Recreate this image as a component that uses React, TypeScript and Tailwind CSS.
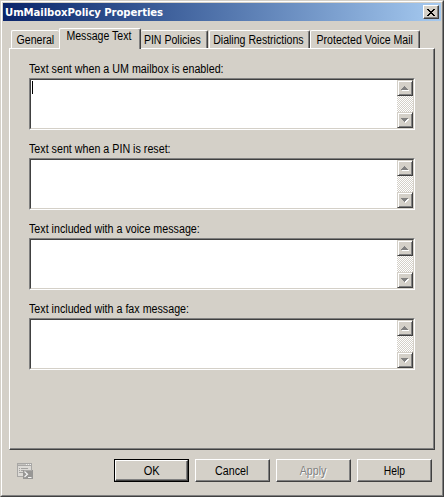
import React from 'react';

const raised =
  'bg-[#d4d0c8] border border-t-white border-l-white border-b-[#404040] border-r-[#404040] shadow-[inset_-1px_-1px_0_#808080]';

function Arrow({ down = false }: { down?: boolean }) {
  return (
    <div className="flex h-4 w-4 items-center justify-center border border-t-[#d4d0c8] border-l-[#d4d0c8] border-b-[#404040] border-r-[#404040] bg-[#d4d0c8] shadow-[inset_1px_1px_0_#fff,inset_-1px_-1px_0_#808080]">
      <svg width="8" height="5" viewBox="0 0 8 5" shapeRendering="crispEdges">
        {down ? (
          <>
            <path d="M1 1h7v1h-1v1h-1v1h-1v1h-1v-1h-1v-1h-1v-1h-1z" fill="#fff" />
            <path d="M0 0h7v1h-1v1h-1v1h-1v1h-1v-1h-1v-1h-1v-1h-1z" fill="#808080" />
          </>
        ) : (
          <>
            <path d="M1 4h7v1h-7z" fill="#fff" />
            <path d="M0 4v-1h1v-1h1v-1h1v-1h1v1h1v1h1v1h1v1z" fill="#808080" />
          </>
        )}
      </svg>
    </div>
  );
}

function Field({ label, caret = false }: { label: string; caret?: boolean }) {
  return (
    <div className="flex h-20 flex-col">
      <label className="h-4 origin-left scale-x-[0.892] leading-[15px]">{label}</label>
      <div className="h-[52px] border border-t-[#808080] border-l-[#808080] border-b-white border-r-white">
        <div className="flex h-full border border-t-[#404040] border-l-[#404040] border-b-[#d4d0c8] border-r-[#d4d0c8] bg-white">
          <div className="flex-1 pt-px pl-px">
            {caret && <div className="h-[13px] w-px bg-black" />}
          </div>
          <div className="flex w-4 flex-col justify-between bg-[repeating-conic-gradient(#fff_0_25%,#d4d0c8_0_50%)] bg-size-[2px_2px]">
            <Arrow />
            <Arrow down />
          </div>
        </div>
      </div>
    </div>
  );
}

function Tab({ children, className }: { children: string; className: string }) {
  return (
    <div className={`flex justify-center rounded-t-[2px] border-t border-l border-white ${className}`}>
      <span className="scale-x-[0.88]">{children}</span>
    </div>
  );
}

const darkEdge = 'border-r border-r-[#404040] shadow-[inset_-1px_0_0_#808080]';

export default function App() {
  return (
    <div className="flex h-[497px] w-[444px] cursor-default flex-col border border-t-[#d4d0c8] border-l-[#d4d0c8] border-r-[#404040] border-b-[#404040] bg-[#d4d0c8] font-['Liberation_Sans',Arial,sans-serif] text-[12px] whitespace-nowrap text-black select-none">
      <div className="flex flex-1 flex-col border border-t-white border-l-white border-r-[#808080] border-b-[#808080] p-px">
        <div className="flex h-[18px] items-center justify-between bg-linear-to-r from-[#0a246a] to-[#a6caf0] px-[2px]">
          <span className="origin-left scale-x-[0.92] pt-[2px] font-['DejaVu_Sans',sans-serif] text-[11px] leading-[16px] font-bold tracking-[-0.1px] text-white">
            UmMailboxPolicy Properties
          </span>
          <button aria-label="Close" className={`flex h-[14px] w-4 items-center justify-center ${raised}`}>
            <svg width="8" height="7" viewBox="0 0 8 7" shapeRendering="crispEdges">
              <path d="M0 0h2v1h1v1h2v-1h1v-1h2v1h-1v1h-1v1h-1v1h1v1h1v1h1v1h-2v-1h-1v-1h-2v1h-1v1h-2v-1h1v-1h1v-1h1v-1h-1v-1h-1v-1h-1z" fill="#000" />
            </svg>
          </button>
        </div>

        <div className="mt-[7px] ml-2 flex h-5 items-end">
          <Tab className="h-[18px] w-12 leading-[19px]">General</Tab>
          <Tab className={`z-10 -mb-px h-[21px] w-[82px] bg-[#d4d0c8] pr-[2px] leading-[15px] ${darkEdge}`}>Message Text</Tab>
          <Tab className={`h-[18px] w-[67px] border-l-0 pr-[3px] leading-[19px] ${darkEdge}`}>PIN Policies</Tab>
          <Tab className={`ml-px h-[18px] w-[101px] pr-[2px] leading-[19px] ${darkEdge}`}>Dialing Restrictions</Tab>
          <Tab className={`h-[18px] w-[110px] leading-[19px] ${darkEdge}`}>Protected Voice Mail</Tab>
        </div>

        <div className="ml-1.5 h-[402px] w-[426px] border border-t-white border-l-white border-r-[#404040] border-b-[#404040] pt-[13px] pr-[19px] pl-[19px] shadow-[inset_-1px_-1px_0_#808080]">
          <Field label="Text sent when a UM mailbox is enabled:" caret />
          <Field label="Text sent when a PIN is reset:" />
          <Field label="Text included with a voice message:" />
          <Field label="Text included with a fax message:" />
        </div>

        <div className="mt-[9px] flex h-[23px] pl-[14px]">
          <svg className="mt-1 mr-[81px]" width="16" height="16" viewBox="0 0 16 16" shapeRendering="crispEdges">
            <path d="M0 0h15v14h-15z" fill="#a8a7a5" />
            <path d="M1 3h13v10h-13z" fill="#dcdad6" />
            <path d="M1 1h13v1h-13z" fill="#c4c2be" />
            <path d="M9 1h1v1h-1zM11 1h1v1h-1zM13 1h1v1h-1z" fill="#f0f0f0" />
            <path d="M2 5h1v1h-1zM4 5h7v1h-7zM2 7h1v1h-1zM4 7h2v1h-2zM2 9h4v1h-4z" fill="#a3a2a0" />
            <path d="M6 7h10v9h-10z" fill="#979694" />
            <path d="M7 7h8v1h-8z" fill="#aaa9a7" />
            <path d="M7.5 8.5l3 2.7l-3 2.8M11 14.5h3.5" stroke="#f4f4f4" strokeWidth="1.2" fill="none" shapeRendering="auto" />
          </svg>
          <div className="flex gap-1.5">
            <button className="h-[23px] w-[75px] border border-black">
              <span className={`flex h-[21px] justify-center leading-[20px] ${raised}`}>
                <span className="scale-x-[0.92]">OK</span>
              </span>
            </button>
            <button className={`flex h-[23px] w-[75px] justify-center pr-[2px] leading-[22px] ${raised}`}>
              <span className="scale-x-[0.89]">Cancel</span>
            </button>
            <button disabled className={`flex h-[23px] w-[75px] justify-center leading-[22px] text-[#808080] [text-shadow:1px_1px_0_#fff] ${raised}`}>
              <span className="scale-x-[0.89]">Apply</span>
            </button>
            <button className={`flex h-[23px] w-[75px] justify-center leading-[22px] ${raised}`}>
              <span className="scale-x-[0.86]">Help</span>
            </button>
          </div>
        </div>
      </div>
    </div>
  );
}
